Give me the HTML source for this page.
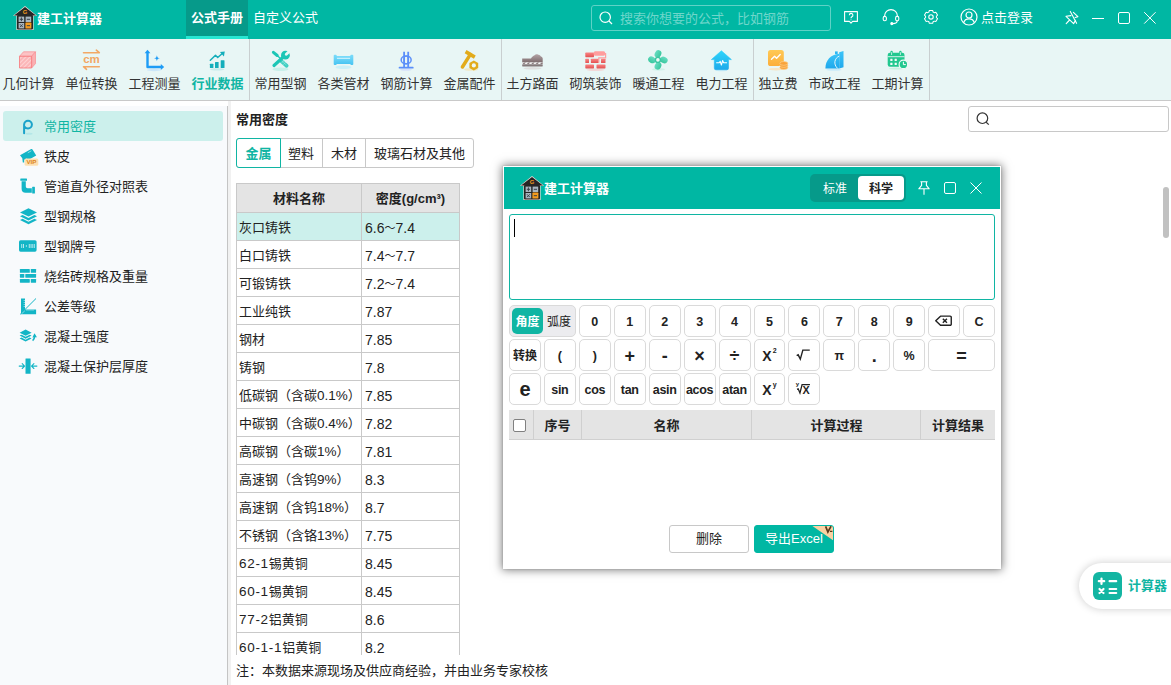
<!DOCTYPE html>
<html lang="zh-CN">
<head>
<meta charset="utf-8">
<title>建工计算器</title>
<style>
*{box-sizing:border-box;margin:0;padding:0}
html,body{width:1171px;height:685px;overflow:hidden;background:#fff}
body{position:relative;font-family:"Liberation Sans","Noto Sans CJK SC",sans-serif;font-size:13px;color:#222;line-height:1}
.abs{position:absolute}
/* ---------- top bar ---------- */
#topbar{position:absolute;left:0;top:0;width:1171px;height:39px;background:#00b7a3;color:#fff}
#topbar .title{position:absolute;left:37px;top:0;height:38px;line-height:38px;font-weight:bold;font-size:13px;white-space:nowrap}
#topbar .tab{position:absolute;top:0;height:39px;line-height:35px;font-size:13px;text-align:center;white-space:nowrap}
#topbar .tab.on{left:186px;width:62px;background:#069a8a;font-weight:bold;border-bottom:3px solid #27e6d2}
#topbar .tab.t2{left:253px}
#tsearch{position:absolute;left:591px;top:5px;width:240px;height:26px;border:1px solid #5fd2c6;border-radius:3px}
#tsearch span{position:absolute;left:28px;top:0;line-height:25px;color:#6fd6cb;white-space:nowrap}
.login{position:absolute;left:981px;top:0;line-height:36px;white-space:nowrap}
/* ---------- toolbar ---------- */
#toolbar{position:absolute;left:0;top:39px;width:1171px;height:62px;background:#e8f6f5;border-bottom:1px solid #c9c9c9}
.tb{position:absolute;top:0;width:63px;height:61px;text-align:center;white-space:nowrap;color:#333}
.tb span{position:absolute;left:-10px;right:-10px;top:37px;line-height:16px;text-align:center}
.tb svg{position:absolute;left:50%;top:9px;margin-left:-12px;width:24px;height:24px}
.tb.on span{color:#10b5a3;font-weight:bold}
.tdiv{position:absolute;top:0;width:1px;height:61px;background:#c9cfd0}
/* ---------- sidebar ---------- */
#side{position:absolute;left:0;top:106px;width:227px;height:579px;background:#f8fafc}
#sideline{position:absolute;left:227px;top:106px;width:1px;height:579px;background:#c4c4c4}
#sidegap{position:absolute;left:228px;top:101px;width:3px;height:584px;background:#f1f1f1}
.si{position:absolute;left:3px;width:220px;height:30px;line-height:30px;white-space:nowrap;border-radius:3px}
.si span{position:absolute;left:41px;top:1px}
.si svg{position:absolute;left:15px;top:5px;width:22px;height:20px;overflow:visible}
.si.on{background:#ccf0ec;color:#10b5a3}
/* ---------- content ---------- */
#ctitle{position:absolute;left:236px;top:111px;line-height:18px;font-weight:bold;white-space:nowrap}
#tabs{position:absolute;left:236px;top:138px;height:30px;width:238px;border:1px solid #c8c8c8;border-radius:3px;background:#fff}
#tabs div{position:absolute;top:-1px;height:30px;line-height:30px;text-align:center;border-left:1px solid #c8c8c8;border-top:1px solid transparent;white-space:nowrap}
#tabs div.on{left:-1px;width:45px;border:1px solid #10b5a3;border-radius:3px 0 0 3px;color:#10b5a3;font-weight:bold;background:#fff}
#csearch{position:absolute;left:968px;top:106px;width:201px;height:26px;border:1px solid #c8c8c8;border-radius:3px;background:#fff}
#thumb{position:absolute;left:1163px;top:187px;width:6px;height:51px;border-radius:3px;background:#c1c1c1}
#tablewrap{position:absolute;left:236px;top:183px;width:224px;height:472px;overflow:hidden}
table{border-collapse:separate;border-spacing:0;table-layout:fixed;width:224px;border-left:1px solid #c9c9c9;border-top:1px solid #c9c9c9}
td,th{border-right:1px solid #c9c9c9;border-bottom:1px solid #c9c9c9;height:28px;padding:2px 0 0 2px;text-align:left;white-space:nowrap;overflow:hidden;font-weight:normal;font-size:13px}
th{background:#e4e4e4;font-weight:bold;text-align:center;padding:1px 0 0 0;height:29px}
tr.sel td{background:#ccf0ec}
td+td{font-size:14px;padding-left:3px}
.n{font-size:13.5px}
.pf{letter-spacing:.7px}
.tl{font-size:11px;position:relative;top:-1px}
#note{position:absolute;left:236px;top:662px;line-height:18px;white-space:nowrap}
/* ---------- dialog ---------- */
#dlg{position:absolute;left:503px;top:166px;width:498px;height:403px;background:#fff;box-shadow:0 0 9px 1px rgba(0,0,0,.5),0 0 2px rgba(0,0,0,.18)}
#dhead{position:absolute;left:1px;top:1px;width:496px;height:42px;background:#00b7a3;color:#fff}
#dhead .t{position:absolute;left:40px;top:0;line-height:44px;font-weight:bold;white-space:nowrap}
#seg{position:absolute;left:306px;top:7px;width:96px;height:28px;border-radius:5px;background:#069a8a}
#seg .a{position:absolute;left:0;top:0;width:50px;line-height:30px;text-align:center;color:#fff;font-size:12px}
#seg .b{position:absolute;left:48px;top:2px;width:46px;height:24px;line-height:26px;font-size:12px;text-align:center;background:#fff;color:#222;border-radius:4px;font-weight:bold}
#dinput{position:absolute;left:6px;top:48px;width:486px;height:86px;border:1px solid #10b5a3;border-radius:3px}
#caret{position:absolute;left:11px;top:53px;width:1px;height:18px;background:#000}
#keys{position:absolute;left:6px;top:139px;width:486px;display:grid;grid-template-columns:repeat(14,1fr);grid-auto-rows:32px;column-gap:3px;row-gap:2px}
#keys div{border:1px solid #dadada;border-radius:5px;text-align:center;line-height:33px;font-weight:bold;font-size:12.5px;white-space:nowrap;color:#222;background:#fff;position:relative;overflow:hidden}
#keys .w2{grid-column:span 2}
#keys .cj{font-size:12px;line-height:33px}
#keys .fn{font-size:12.5px;letter-spacing:-.3px;line-height:32px}
#keys .op{font-size:18px;line-height:32px}
#keys .e{font-size:20px;line-height:31px}
#keys .x{font-size:14px;line-height:33px}
#keys sup{font-size:7px;position:relative;top:-1px;vertical-align:top;line-height:24px;margin-left:1px}
#keys .segk{background:#ececef}
#keys .segk i{position:absolute;font-style:normal;top:2px;height:26px;line-height:28px;border-radius:5px;font-size:12px}
#keys .segk .a{left:2px;width:31px;background:#10b5a3;color:#fff}
#keys .segk .b{left:34px;width:30px;font-weight:normal}
#keys svg{position:absolute;left:0;top:0;width:100%;height:100%}
#dth{position:absolute;left:6px;top:244px;width:486px;height:30px;background:#e4e4e4;border-bottom:1px solid #d0d0d0}
#dth div{position:absolute;top:0;height:29px;line-height:31px;text-align:center;font-weight:bold;border-left:1px solid #cfcfcf;white-space:nowrap}
#dth .cb{position:absolute;left:4px;top:9px;width:13px;height:13px;background:#fff;border:1px solid #808080;border-radius:2px}
.btn{position:absolute;top:359px;width:80px;height:28px;line-height:26px;text-align:center;border:1px solid #c8c8c8;border-radius:3px;white-space:nowrap}
.btn.p{background:#00b7a3;border-color:#00b7a3;color:#fff;overflow:hidden}
/* ---------- floating ---------- */
#float{position:absolute;left:1079px;top:563px;width:120px;height:46px;border-radius:23px;background:#fff;box-shadow:0 0 9px rgba(0,0,0,.2)}
#float .ic{position:absolute;left:14px;top:9px;width:29px;height:28px;border-radius:6px;background:#13b5a2}
#float span{position:absolute;left:49px;top:0;line-height:45px;font-weight:bold;color:#10b5a3;white-space:nowrap}
</style>
</head>
<body>
<!-- TOPBAR -->
<div id="topbar">
  <div class="title">建工计算器</div>
  <div class="tab on">公式手册</div>
  <div class="tab t2">自定义公式</div>
  <div id="tsearch"><span>搜索你想要的公式，比如钢筋</span></div>
  <div class="login">点击登录</div>

  <svg class="abs" style="left:13px;top:6px" width="24" height="24" viewBox="0 0 24 24">
<path d="M12 0L24 9.700 20.600 9.900 20.600 23.900 3.400 23.900 3.400 9.900 0 9.700z" fill="#f1d9d4"/>
<path d="M12 1L23 9.500H1z" fill="#262626"/>
<rect x="4" y="9" width="16" height="14.400" rx="1" fill="#262626"/>
<rect x="5.600" y="10.600" width="5.600" height="5.400" fill="#a9b6c1"/><rect x="12.600" y="10.600" width="5.600" height="5.400" fill="#a9b6c1"/>
<rect x="5.600" y="17" width="5.600" height="5.400" fill="#a9b6c1"/><rect x="12.400" y="16.600" width="6" height="6" rx=".6" fill="#f59c1f"/>
<path d="M8.400 11.400v3.800M6.800 13.300h3.200M13.800 13.300h3.200M7 18.300l2.800 2.800M9.800 18.300L7 21.100M13.800 19.700h3.200" stroke="#39424b" stroke-width="1" fill="none"/>
<text x="12" y="8.400" font-size="5.800" font-weight="bold" fill="#f59c1f" text-anchor="middle" font-family="Liberation Sans,sans-serif">G</text>
</svg>
  <svg class="abs" style="left:598px;top:10px" width="16" height="16" viewBox="0 0 16 16" fill="none" stroke="#fff" stroke-width="1.2"><circle cx="7.2" cy="7.2" r="5.2"/><path d="M11 11l3 3"/></svg>
  <svg class="abs" style="left:843px;top:9px" width="17" height="17" viewBox="0 0 17 17" fill="none" stroke="#fff" stroke-width="1.1"><path d="M1.6 2.6h12.8v9.8H9.6L8 14.2 6.4 12.4H1.6z" stroke-linejoin="round"/><path d="M6.3 6.2a1.8 1.8 0 1 1 2.6 1.6c-.6.4-.9.7-.9 1.4M8 10.4v.9" stroke-width="1.1"/></svg>
  <svg class="abs" style="left:882px;top:9px" width="18" height="17" viewBox="0 0 18 17" fill="none" stroke="#fff" stroke-width="1.1"><path d="M2.6 7.6V7a6.4 6.4 0 0 1 12.8 0v.6"/><rect x="1.2" y="7.4" width="3.2" height="4.4" rx="1.5"/><rect x="13.6" y="7.4" width="3.2" height="4.4" rx="1.5"/><path d="M15.2 11.8c0 2-2 2.8-4.4 2.8"/><circle cx="9.8" cy="14.6" r="1" fill="#fff"/></svg>
  <svg class="abs" style="left:923px;top:9px" width="16" height="16" viewBox="0 0 16 16" fill="none" stroke="#fff" stroke-width="1.1"><path d="M6.2 1.4h3.6l.5 1.7 1.2.7 1.7-.4 1.8 3.1-1.2 1.3v1.4l1.2 1.3-1.8 3.1-1.7-.4-1.2.7-.5 1.7H6.2l-.5-1.7-1.2-.7-1.7.4L1 10.500l1.200-1.300V7.800L1 6.500l1.800-3.100 1.700.4 1.200-.7z" stroke-linejoin="round" transform="translate(8 7.900) scale(.93 .9) translate(-8 -8.500)"/><circle cx="8" cy="7.900" r="2.200"/></svg>
  <svg class="abs" style="left:960px;top:8px" width="18" height="18" viewBox="0 0 18 18" fill="none" stroke="#fff" stroke-width="1.2"><circle cx="9" cy="9" r="8"/><circle cx="9" cy="7" r="3"/><path d="M3.600 14.700c.8-2.600 2.900-3.900 5.400-3.900s4.600 1.300 5.400 3.900"/></svg>
  <svg class="abs" style="left:1064px;top:9px" width="16" height="17" viewBox="0 0 16 17" fill="none" stroke="#fff" stroke-width="1.100" stroke-linejoin="round"><path d="M6.900 6.600L2 7.300 9.600 14.600 11.500 11.400M5.600 11L2.200 14.600M9.400 3.400L13.900 7.700 11.200 8.500M6.300 2.400L12.600 14.300" stroke-linecap="round"/></svg>
  <div class="abs" style="left:1092px;top:18px;width:12px;height:1px;background:#fff"></div>
  <div class="abs" style="left:1118px;top:12px;width:12px;height:12px;border:1px solid #fff;border-radius:2px"></div>
  <svg class="abs" style="left:1143px;top:11px" width="14" height="14" viewBox="0 0 14 14" stroke="#fff" stroke-width="1"><path d="M1.200 1.200l11.400 11.400M12.600 1.200L1.200 12.600"/></svg>
</div>
<!-- TOOLBAR -->
<div id="toolbar">
  <div class="tb" style="left:-3px"><svg viewBox="0 0 24 24"><defs><pattern id="hs" width="3" height="3" patternUnits="userSpaceOnUse" patternTransform="rotate(45)"><rect width="3" height="3" fill="#fbb4b6"/><rect width="1.100" height="3" fill="#fdd3d4"/></pattern></defs><path d="M2.500 8.300L6.500 3.800H18.500L14.600 8.300z" fill="#fcc3c5" stroke="#f98d90" stroke-width=".7" stroke-linejoin="round"/><path d="M14.600 8.300L18.500 3.800V15.600L14.600 20z" fill="#fab0b2" stroke="#f98d90" stroke-width=".7" stroke-linejoin="round"/><rect x="2.500" y="8.300" width="12.100" height="11.700" fill="url(#hs)" stroke="#f8767a" stroke-width=".8" stroke-linejoin="round"/></svg><span>几何计算</span></div>
  <div class="tb" style="left:60px"><svg viewBox="0 0 24 24"><g fill="none" stroke="#f2a765" stroke-width="1.600" stroke-linecap="round" stroke-linejoin="round"><path d="M3.500 4.700H19.300L16.300 2.200"/><path d="M19.300 18.700H3.500L6.500 21.300"/></g><text x="11.500" y="15.100" font-size="11.500" font-weight="bold" fill="#f2a765" text-anchor="middle" font-family="Liberation Sans,sans-serif">cm</text></svg><span>单位转换</span></div>
  <div class="tb" style="left:123px"><svg viewBox="0 0 24 24"><ellipse cx="11" cy="22" rx="7" ry="1.200" fill="#bfe0fb" opacity=".7"/><path d="M4.500 4.500V19H18.500" fill="none" stroke="#1e9cf6" stroke-width="2.400" stroke-linejoin="round"/><path d="M4.500 1.800L7.400 5.200H1.600z" fill="#1e9cf6"/><path d="M21.200 19L17.800 16.100V21.900z" fill="#1e9cf6"/><path d="M13.900 7.200c.3 2 .9 2.700 3 3-2.100.3-2.700 1-3 3-.3-2-.9-2.700-3-3 2.100-.3 2.700-1 3-3z" fill="#1e9cf6"/></svg><span>工程测量</span></div>
  <div class="tb on" style="left:186px"><svg viewBox="0 0 24 24"><ellipse cx="11.200" cy="21.400" rx="7" ry="1.200" fill="#b8e8ea" opacity=".7"/><g fill="#14aebb"><rect x="3.900" y="15.700" width="3.500" height="4.400" rx=".5"/><rect x="9" y="14" width="3.600" height="6.100" rx=".5"/><rect x="14.700" y="12.200" width="3.800" height="7.900" rx=".5"/><path d="M13.900 4.100L18.800 3.500 17.900 8.400z"/></g><path d="M4.300 12.300L9.500 7.300 11.700 9.500 16.300 5.500" fill="none" stroke="#14aebb" stroke-width="1.500" stroke-linecap="round" stroke-linejoin="round"/></svg><span>行业数据</span></div>
  <div class="tdiv" style="left:249px"></div>
  <div class="tb" style="left:249px"><svg viewBox="0 0 24 24"><ellipse cx="11.500" cy="21.200" rx="8" ry="1.700" fill="#bdeee6" opacity=".75"/><g fill="none" stroke="#1cc6b6" stroke-linecap="round"><path d="M4.400 4.300L8.200 7.500" stroke-width="3"/><path d="M8.200 7.500L12 11" stroke-width="1.300"/><path d="M12.600 13.400L17.600 17.700" stroke-width="3.800" stroke="#3fd0c2"/><path d="M5 17.500L14.600 8.800" stroke-width="3.200"/></g><circle cx="16.400" cy="7.200" r="4.400" fill="#1cc6b6"/><path d="M17.300 6.300L21.500 2.300" stroke="#e8f6f5" stroke-width="2.900" stroke-linecap="round"/><path d="M12.400 15.200l3-3M14.200 16.800l3-3M12.800 12.800l4.600 4.200" stroke="#a9ebe4" stroke-width=".5"/></svg><span>常用型钢</span></div>
  <div class="tb" style="left:312px"><svg viewBox="0 0 24 24"><defs><linearGradient id="pg" x1="0" y1="0" x2="0" y2="1"><stop offset="0" stop-color="#7bdcfa"/><stop offset="1" stop-color="#48c4f2"/></linearGradient></defs><ellipse cx="11.500" cy="19.300" rx="8" ry="1.800" fill="#bfeefa" opacity=".7"/><rect x="3.500" y="8" width="16" height="8" fill="url(#pg)"/><rect x="1.700" y="6.800" width="3" height="10.300" rx="1" fill="url(#pg)"/><rect x="18.300" y="6.800" width="3" height="10.300" rx="1" fill="url(#pg)"/><rect x="4.900" y="9.800" width="13.200" height="1" fill="#d9f5fd"/></svg><span>各类管材</span></div>
  <div class="tb" style="left:375px"><svg viewBox="0 0 24 24"><ellipse cx="11" cy="21.600" rx="6" ry="1.200" fill="#cfdcfb" opacity=".8"/><g fill="none" stroke="#5b8ff9"><path d="M9.100 3.700V19.400M13.200 3.700V19.400" stroke-width="1.800"/><ellipse cx="11.150" cy="11.900" rx="5" ry="3.900" stroke-width="1.500"/><ellipse cx="11.150" cy="11.900" rx="2.050" ry="3.900" stroke-width="1.200"/><path d="M4.500 19.700H17.800" stroke-width="1.700" stroke-linecap="round"/></g></svg><span>钢筋计算</span></div>
  <div class="tb" style="left:438px"><svg viewBox="0 0 24 24"><ellipse cx="13" cy="21.500" rx="7" ry="1.300" fill="#f3e3b0" opacity=".7"/><g stroke="#e2ab1b" fill="none"><path d="M7.600 3.600L16.800 9.100" stroke-width="3.600"/><path d="M12.200 6.600L4.400 19" stroke-width="3.500" stroke-linecap="round"/></g><path d="M15.800 12.400L20.200 14.900 20.200 19.900 15.800 22.400 11.400 19.900 11.400 14.900z" fill="#e2ab1b"/><circle cx="15.800" cy="17.400" r="2.100" fill="#eef8f5"/></svg><span>金属配件</span></div>
  <div class="tdiv" style="left:501px"></div>
  <div class="tb" style="left:501px"><svg viewBox="0 0 24 24"><defs><linearGradient id="rg" x1="0" y1="0" x2="0" y2="1"><stop offset="0" stop-color="#b3a3a5"/><stop offset="1" stop-color="#7c6a6c"/></linearGradient></defs><ellipse cx="11.500" cy="20.300" rx="9" ry="1.200" fill="#d8d0d0" opacity=".6"/><path d="M1.200 10.400H10c1-1.600 2.200-2.800 3.600-3.200.7-.9 2.500-1.200 3.600-.4 1 0 2.200.6 2.700 1.600 1 .4 1.800 1.200 1.800 2V14.500H1.200z" fill="url(#rg)"/><rect x="1.200" y="14.500" width="20.500" height="1.600" fill="#f6f3f3"/><path d="M1.400 16l1.600-1.400h2l-1.600 1.400zM5.800 16l1.600-1.400h2l-1.600 1.400zM10.200 16l1.600-1.400h2l-1.600 1.400zM14.600 16l1.600-1.400h2l-1.600 1.400zM19 16l1.600-1.400h1.100v1.400z" fill="#8a7b7d"/><rect x="1.200" y="16.300" width="20.500" height="2.100" rx=".4" fill="#85797a"/></svg><span>土方路面</span></div>
  <div class="tb" style="left:564px"><svg viewBox="0 0 24 24"><defs><linearGradient id="bg1" x1="0" y1="0" x2="0" y2="1"><stop offset="0" stop-color="#f98585"/><stop offset="1" stop-color="#e35252"/></linearGradient></defs><ellipse cx="11.500" cy="21.800" rx="9" ry="1.200" fill="#f7cccc" opacity=".7"/><g fill="url(#bg1)"><rect x="1.300" y="4.600" width="8.700" height="4.600" rx=".6"/><rect x="1.300" y="10.800" width="3.700" height="4.200" rx=".5"/><rect x="6.900" y="10.800" width="7.800" height="4.200" rx=".5"/><rect x="17" y="10.800" width="4.500" height="4.200" rx=".5"/><rect x="1.300" y="16.400" width="8.700" height="4" rx=".6"/><rect x="12.500" y="16.400" width="9" height="4" rx=".6"/></g><rect x="9.600" y="3.300" width="11.600" height="4.400" rx="1.600" fill="#ff9d9d"/><path d="M21 5.500h.6V9.800H14.800V14.800" fill="none" stroke="#ff9d9d" stroke-width="1.200"/></svg><span>砌筑装饰</span></div>
  <div class="tb" style="left:627px"><svg viewBox="0 0 24 24"><defs><linearGradient id="fng" x1="0" y1="0" x2="0" y2="1"><stop offset="0" stop-color="#68dcc2"/><stop offset="1" stop-color="#38c79d"/></linearGradient></defs><ellipse cx="11.500" cy="21.400" rx="6.500" ry="1.300" fill="#c5f0e4" opacity=".7"/><g fill="url(#fng)"><ellipse cx="11" cy="5.900" rx="3.900" ry="3.200" transform="rotate(-62 11 5.900)"/><ellipse cx="16.900" cy="12" rx="3.900" ry="3.200" transform="rotate(28 16.900 12)"/><ellipse cx="11" cy="17.900" rx="3.900" ry="3.200" transform="rotate(-62 11 17.900)"/><ellipse cx="4.900" cy="11.800" rx="3.900" ry="3.200" transform="rotate(28 4.900 11.800)"/></g><circle cx="10.900" cy="11.900" r="2.500" fill="#eefaf6" stroke="#3cc6a2" stroke-width="1.400"/></svg><span>暖通工程</span></div>
  <div class="tb" style="left:690px"><svg viewBox="0 0 24 24"><defs><linearGradient id="hg" x1="0" y1="0" x2="0" y2="1"><stop offset="0" stop-color="#2dd4fb"/><stop offset="1" stop-color="#1eaaea"/></linearGradient></defs><ellipse cx="11.400" cy="22.300" rx="6" ry="1" fill="#c0ebfb" opacity=".7"/><path d="M11.400 2.700L21.400 11.600H18.500V20.200a1.500 1.500 0 0 1-1.500 1.500H5.800a1.500 1.500 0 0 1-1.500-1.500V11.600H1.400z" fill="url(#hg)" stroke="url(#hg)" stroke-width=".6" stroke-linejoin="round"/><path d="M6.600 14.700H9.200L10.200 13.300 11.400 17 12.600 12.600 13.600 14.700H16.600" fill="none" stroke="#fff" stroke-width="1.100" stroke-linejoin="round" stroke-linecap="round"/></svg><span>电力工程</span></div>
  <div class="tdiv" style="left:753px"></div>
  <div class="tb" style="left:753px;width:50px"><svg viewBox="0 0 24 24"><defs><linearGradient id="fg" x1="0" y1="0" x2="0" y2="1"><stop offset="0" stop-color="#ffc955"/><stop offset="1" stop-color="#fcae3a"/></linearGradient></defs><ellipse cx="10" cy="21.200" rx="7.500" ry="1.300" fill="#fbe0b5" opacity=".8"/><rect x="2" y="2" width="15.800" height="16" rx="2.600" fill="url(#fg)"/><path d="M5.500 11.200L8.600 8.200 10.600 10.200 14.200 6.600" fill="none" stroke="#fff" stroke-width="1.400" stroke-linecap="round" stroke-linejoin="round"/><g fill="#f8a33a" stroke="#fdd08c" stroke-width=".7"><ellipse cx="17.800" cy="19.600" rx="4" ry="1.900"/><ellipse cx="17.800" cy="17.500" rx="4" ry="1.900"/><ellipse cx="17.800" cy="15.400" rx="4" ry="1.900"/></g></svg><span>独立费</span></div>
  <div class="tb" style="left:803px"><svg viewBox="0 0 24 24"><defs><linearGradient id="mg" x1="0" y1="0" x2="0" y2="1"><stop offset="0" stop-color="#3cc4f8"/><stop offset="1" stop-color="#1fa8ec"/></linearGradient></defs><ellipse cx="11" cy="21.700" rx="7.500" ry="1" fill="#c0e8fb" opacity=".8"/><path d="M2.400 20.500C2.400 12.400 7.600 6.600 16.200 5.800V20.500z" fill="url(#mg)"/><path d="M16.200 4.300L20.500 3V19.300L16.200 20.500z" fill="url(#mg)"/><rect x="12" y="3.400" width="2.700" height="2.700" fill="#2db7f4"/><path d="M16.200 8.200c-4.600 1.800-6.200 8-1.600 12.200" fill="none" stroke="#e8f7fd" stroke-width="1"/></svg><span>市政工程</span></div>
  <div class="tb" style="left:866px"><svg viewBox="0 0 24 24"><ellipse cx="10.500" cy="20.600" rx="7.500" ry="1" fill="#bff0dc" opacity=".8"/><rect x="1.700" y="4.700" width="16.800" height="14" rx="2.200" fill="#22c88f"/><path d="M5.600 4V6.200M14.400 4V6.200" stroke="#22c88f" stroke-width="2.400" stroke-linecap="round"/><path d="M5.600 4.600V6.600M14.400 4.600V6.600" stroke="#e8f6f5" stroke-width=".8" stroke-linecap="round"/><path d="M1.700 8.700H18.500" stroke="#e8f6f5" stroke-width=".9"/><g fill="#f2fbf8"><rect x="4.300" y="10.800" width="2.200" height="2.200" rx=".3"/><rect x="8.600" y="10.800" width="2.200" height="2.200" rx=".3"/><rect x="4.300" y="14.800" width="2.200" height="2.200" rx=".3"/><rect x="8.600" y="14.800" width="2.200" height="2.200" rx=".3"/></g><circle cx="17.400" cy="16.400" r="4.300" fill="#22c88f" stroke="#eefaf6" stroke-width="1.200"/><path d="M17.400 14.200V16.600H19.400" fill="none" stroke="#fff" stroke-width="1" stroke-linecap="round" stroke-linejoin="round"/></svg><span>工期计算</span></div>
  <div class="tdiv" style="left:929px"></div>
</div>
<!-- SIDEBAR -->
<div id="side"></div><div id="sideline"></div><div id="sidegap"></div>
<div class="si on" style="top:111px"><svg viewBox="0 0 22 20"><ellipse cx="11" cy="17.800" rx="3.500" ry="1" fill="#a9e3e6" opacity=".7"/><path d="M6.100 17.300V8.600a3.900 3.900 0 1 1 3.900 3.900c-1.400 0-2.600-.6-3.300-1.600" fill="none" stroke="#1ba3ca" stroke-width="2" stroke-linecap="round"/></svg><span>常用密度</span></div>
<div class="si" style="top:141px"><svg viewBox="0 0 22 20"><path d="M2 9.300L13.200 3.100a1 1 0 0 1 1.300.3L18.200 9.600 9.500 14.400 8.400 12.600 6.200 13.800 6.200 16.400 4.800 16.400 4.300 12.300z" fill="#13b5c6"/><path d="M9.800 6.800l3.600-2" stroke="#d8f4f6" stroke-width=".6"/><rect x="6.600" y="12.500" width="13.700" height="7.300" rx="1.500" fill="#fde0b1"/><text x="13.450" y="18.400" font-size="6.200" font-weight="bold" fill="#dc8420" text-anchor="middle" font-family="Liberation Sans,sans-serif">VIP</text></svg><span>铁皮</span></div>
<div class="si" style="top:171px"><svg viewBox="0 0 22 20"><g fill="#13b5c6"><rect x="2.300" y="2.500" width="6.700" height="2.300" rx=".5"/><path d="M3.600 5.200H7.800V10.400a1.800 1.800 0 0 0 1.800 1.800H13.800V16.700H7.600a4 4 0 0 1-4-4z"/><rect x="14.200" y="10.700" width="2.700" height="6.700" rx=".5"/></g></svg><span>管道直外径对照表</span></div>
<div class="si" style="top:201px"><svg viewBox="0 0 22 20"><g fill="#13b5c6"><path d="M10.500 2.300L19 6.400 10.500 10.500 2 6.400z"/><path d="M2 10.200L4.600 9 10.500 11.900 16.400 9 19 10.200 10.500 14.400z"/><path d="M2 14L4.600 12.800 10.500 15.700 16.400 12.800 19 14 10.500 18.200z"/></g></svg><span>型钢规格</span></div>
<div class="si" style="top:231px"><svg viewBox="0 0 22 20"><rect x="1" y="4.200" width="17.600" height="11.500" rx="1.600" fill="#13b5c6"/><g fill="#c9eff3"><rect x="3.300" y="8" width=".9" height="4"/><rect x="5" y="8" width=".9" height="4"/><rect x="7.800" y="9.400" width="1.200" height="1.200"/><rect x="10.800" y="8" width=".9" height="4"/><rect x="12.600" y="8" width=".9" height="4"/><rect x="14.400" y="8" width=".9" height="4"/><rect x="16" y="8" width=".7" height="4"/></g></svg><span>型钢牌号</span></div>
<div class="si" style="top:261px"><svg viewBox="0 0 22 20"><g fill="#13b5c6"><rect x="1.900" y="3.100" width="9.900" height="3.700" rx=".4"/><rect x="12.800" y="3.100" width="5.300" height="3.700" rx=".4"/><rect x="1.900" y="8" width="4.400" height="3.700" rx=".4"/><rect x="7.300" y="8" width="10.800" height="3.700" rx=".4"/><rect x="1.900" y="13" width="9.900" height="3.700" rx=".4"/><rect x="12.800" y="13" width="5.300" height="3.700" rx=".4"/></g></svg><span>烧结砖规格及重量</span></div>
<div class="si" style="top:291px"><svg viewBox="0 0 22 20"><path d="M3 2.400H7V13.500H18.100V18.200H3z" fill="#13b5c6"/><path d="M2.200 18.300L18 2.500" stroke="#13b5c6" stroke-width="1"/><path d="M5.600 4.500h1.400M5.600 6.500h1.400M5.600 8.500h1.400M5.600 10.500h1.400M9 13.500v1.400M11 13.500v1.400M13 13.500v1.400M15 13.500v1.400M6.800 14.800L3.600 17.800" stroke="#d4f2f5" stroke-width=".6"/></svg><span>公差等级</span></div>
<div class="si" style="top:321px"><svg viewBox="0 0 22 20"><g fill="#13b5c6"><path d="M7.600 3.600L13.600 6.700 7.600 9.800 1.600 6.700z"/><path d="M1.600 9.600L3.500 8.700 7.600 10.800 11.700 8.700 13.600 9.600 7.600 12.700z"/><path d="M1.600 12.500L3.500 11.600 7.600 13.700 11.700 11.600 13.600 12.500 7.600 15.600z"/><path d="M16.500 7.200L18.900 11.200 14.400 11.400z"/></g><path d="M14.600 14.600c1.400-1 2.100-2.600 2.100-5" fill="none" stroke="#13b5c6" stroke-width="1.500"/></svg><span>混凝土强度</span></div>
<div class="si" style="top:351px"><svg viewBox="0 0 22 20"><rect x="7.500" y="2.400" width="5.100" height="15.400" rx=".4" fill="#13b5c6"/><path d="M1.200 10.100H6.600M4.200 7.700L6.600 10.100 4.200 12.500M18.900 10.100H13.500M15.900 7.700L13.500 10.100 15.900 12.500" fill="none" stroke="#13b5c6" stroke-width="1.100" stroke-linecap="round" stroke-linejoin="round"/></svg><span>混凝土保护层厚度</span></div>
<!-- CONTENT -->
<div id="ctitle">常用密度</div>
<div id="tabs">
  <div class="on">金属</div>
  <div style="left:43px;width:42px;border-left:none">塑料</div>
  <div style="left:85px;width:43px">木材</div>
  <div style="left:128px;width:108px">玻璃石材及其他</div>
</div>
<div id="csearch"><svg class="abs" style="left:6px;top:4px" width="16" height="16" viewBox="0 0 16 16" fill="none" stroke="#333" stroke-width="1.200"><circle cx="7.400" cy="7.200" r="5.300"/><path d="M11.200 11.200l2.600 2.400"/></svg></div>
<div id="thumb"></div>
<div id="tablewrap">
<table>
<colgroup><col style="width:125px"><col style="width:98px"></colgroup>
<tr><th>材料名称</th><th>密度(g/cm³)</th></tr>
<tr class="sel"><td>灰口铸铁</td><td>6.6<span class="tl">～</span>7.4</td></tr>
<tr><td>白口铸铁</td><td>7.4<span class="tl">～</span>7.7</td></tr>
<tr><td>可锻铸铁</td><td>7.2<span class="tl">～</span>7.4</td></tr>
<tr><td>工业纯铁</td><td>7.87</td></tr>
<tr><td>钢材</td><td>7.85</td></tr>
<tr><td>铸钢</td><td>7.8</td></tr>
<tr><td>低碳钢（含碳<span class="n">0.1%</span>）</td><td>7.85</td></tr>
<tr><td>中碳钢（含碳<span class="n">0.4%</span>）</td><td>7.82</td></tr>
<tr><td>高碳钢（含碳<span class="n">1%</span>）</td><td>7.81</td></tr>
<tr><td>高速钢（含钨<span class="n">9%</span>）</td><td>8.3</td></tr>
<tr><td>高速钢（含钨<span class="n">18%</span>）</td><td>8.7</td></tr>
<tr><td>不锈钢（含铬<span class="n">13%</span>）</td><td>7.75</td></tr>
<tr><td><span class="n pf">62-1</span>锡黄铜</td><td>8.45</td></tr>
<tr><td><span class="n pf">60-1</span>锡黄铜</td><td>8.45</td></tr>
<tr><td><span class="n pf">77-2</span>铝黄铜</td><td>8.6</td></tr>
<tr><td><span class="n pf">60-1-1</span>铝黄铜</td><td>8.2</td></tr>
<tr><td>硅黄铜</td><td>8.5</td></tr>
</table>
</div>
<div id="note">注：本数据来源现场及供应商经验，并由业务专家校核</div>
<!-- DIALOG -->
<div id="dlg">
  <div id="dhead">
    <div class="t">建工计算器</div>

    <svg class="abs" style="left:16px;top:9px" width="24" height="24" viewBox="0 0 24 24">
<path d="M12 0L24 9.700 20.600 9.900 20.600 23.900 3.400 23.900 3.400 9.900 0 9.700z" fill="#f1d9d4"/>
<path d="M12 1L23 9.500H1z" fill="#262626"/>
<rect x="4" y="9" width="16" height="14.400" rx="1" fill="#262626"/>
<rect x="5.600" y="10.600" width="5.600" height="5.400" fill="#a9b6c1"/><rect x="12.600" y="10.600" width="5.600" height="5.400" fill="#a9b6c1"/>
<rect x="5.600" y="17" width="5.600" height="5.400" fill="#a9b6c1"/><rect x="12.400" y="16.600" width="6" height="6" rx=".6" fill="#f59c1f"/>
<path d="M8.400 11.400v3.800M6.800 13.300h3.200M13.800 13.300h3.200M7 18.300l2.800 2.800M9.800 18.300L7 21.100M13.800 19.700h3.200" stroke="#39424b" stroke-width="1" fill="none"/>
<text x="12" y="8.400" font-size="5.800" font-weight="bold" fill="#f59c1f" text-anchor="middle" font-family="Liberation Sans,sans-serif">G</text>
</svg>
    <svg class="abs" style="left:413px;top:13px" width="14" height="16" viewBox="0 0 14 16" fill="none" stroke="#fff" stroke-width="1.100" stroke-linejoin="round"><path d="M3.400 1.700H10.600M4.600 1.700V5.400L1.800 8.800H12.200L9.400 5.400V1.700M7 8.800V14.800"/></svg>
    <div class="abs" style="left:440px;top:15px;width:12px;height:12px;border:1px solid #fff;border-radius:2px"></div>
    <svg class="abs" style="left:465px;top:14px" width="14" height="14" viewBox="0 0 14 14" stroke="#fff" stroke-width="1"><path d="M1.500 1.500l11 11M12.500 1.500l-11 11"/></svg>
    <div id="seg"><div class="a">标准</div><div class="b">科学</div></div>
  </div>
  <div id="dinput"></div><div id="caret"></div>
  <div id="keys">
    <div class="w2 segk"><i class="a">角度</i><i class="b">弧度</i></div>
    <div>0</div><div>1</div><div>2</div><div>3</div><div>4</div><div>5</div><div>6</div><div>7</div><div>8</div><div>9</div>
    <div><svg viewBox="0 0 32 30"><path d="M12.300 9.800H22.600a1.200 1.200 0 0 1 1.200 1.200V18.400a1.200 1.200 0 0 1-1.200 1.200H12.300L7.200 14.700z" fill="none" stroke="#222" stroke-width="1.500" stroke-linejoin="round"/><path d="M14.800 12.500l4.400 4.400M19.200 12.500l-4.400 4.400" stroke="#222" stroke-width="1.500"/></svg></div>
    <div>C</div>
    <div class="cj">转换</div><div>(</div><div>)</div><div class="op">+</div><div class="op">-</div><div class="op">×</div><div class="op">÷</div>
    <div class="x">X<sup>2</sup></div>
    <div><svg viewBox="0 0 32 30"><path d="M8.200 15.600l1.600-.8 2.300 4.600 2.700-9.600h7.400" fill="none" stroke="#222" stroke-width="1.500" stroke-linejoin="miter"/></svg></div>
    <div>π</div><div class="op">.</div><div>%</div><div class="w2 op">=</div>
    <div class="e">e</div><div class="fn">sin</div><div class="fn">cos</div><div class="fn">tan</div><div class="fn">asin</div><div class="fn">acos</div><div class="fn">atan</div>
    <div class="x">X<sup>y</sup></div>
    <div><svg viewBox="0 0 32 30"><path d="M8.600 15.400l1.200-.6 1.900 4.400 2.300-8.800h8.400" fill="none" stroke="#222" stroke-width="1.400"/><text x="9" y="12" font-size="6.500" font-weight="bold" fill="#222" text-anchor="middle" font-family="Liberation Sans,sans-serif">y</text><text x="18.300" y="20" font-size="11.500" font-weight="bold" fill="#222" text-anchor="middle" font-family="Liberation Sans,sans-serif">X</text></svg></div>
  </div>
  <div id="dth">
    <span class="cb"></span>
    <div style="left:24px;width:48px">序号</div>
    <div style="left:72px;width:170px">名称</div>
    <div style="left:242px;width:170px">计算过程</div>
    <div style="left:411px;width:75px">计算结果</div>
  </div>
  <div class="btn" style="left:166px">删除</div>
  <div class="btn p" style="left:251px">导出Excel<svg class="abs" style="right:-1px;top:-1px" width="23" height="16" viewBox="0 0 23 16"><path d="M0 0H23V16z" fill="#fbd1a2"/><path d="M14.600 1.400l2.300 5.600 3.200-5.800" fill="none" stroke="#5b3a1c" stroke-width="1.700"/><path d="M19 6.400h2.400" stroke="#5b3a1c" stroke-width="1.200"/></svg></div>
</div>
<!-- FLOAT -->
<div id="float"><div class="ic"><svg width="29" height="28" viewBox="0 0 29 28" stroke="#fff" stroke-width="2.200" stroke-linecap="round" fill="none"><path d="M5.800 9.200h5.400M8.500 6.500v5.400M6.500 17l4 4M10.500 17l-4 4M16.600 9.200h6.600M16.600 17h6.600M16.600 21h6.600"/></svg></div><span>计算器</span></div>
</body>
</html>
